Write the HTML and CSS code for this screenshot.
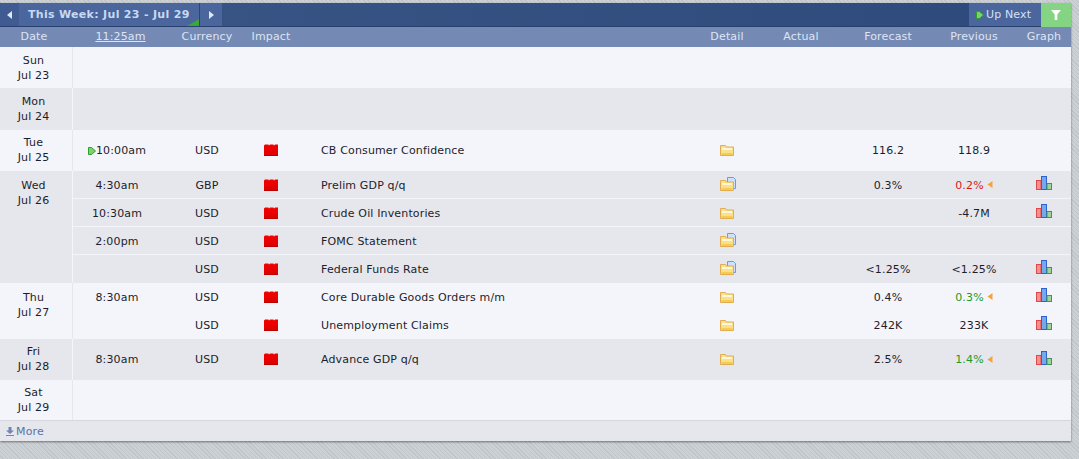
FILE: index.html
```html
<!DOCTYPE html>
<html lang="en">
<head>
<meta charset="utf-8">
<title>Calendar</title>
<link rel="stylesheet" href="styles.css">
</head>
<body>
<svg class="defs" width="0" height="0">
  <defs>
    <linearGradient id="red" x1="0" y1="0" x2="0" y2="1"><stop offset="0" stop-color="#f40000"/><stop offset="1" stop-color="#dc0000"/></linearGradient>
    <symbol id="factory" viewBox="0 0 14 12"><path d="M0 12V1.500L1 .5h3.300l.7 1 1-1h3.300l.7 1 1-1H14V12z" fill="url(#red)"/><path d="M0 11.500h14" stroke="#b80000"/></symbol>
    <symbol id="folder" viewBox="0 0 14 11"><path d="M.5.5h5l1 1.500h7v8.500H.5z" fill="#fbe08a" stroke="#e2ad52"/><path d="M2 4h10" stroke="#fff8d8" stroke-width="2"/><path d="M1.500 9h11" stroke="#f6cc50" stroke-width="2"/></symbol>
    <symbol id="folderdoc" viewBox="0 0 16 14"><path d="M7.500.5h6l2 2v9h-8z" fill="#cfe0fa" stroke="#7298dc"/><path d="M.5 3.500h5l1 1.500h7v8.500H.5z" fill="#fbe08a" stroke="#e2ad52"/><path d="M2 7h10" stroke="#fff8d8" stroke-width="2"/><path d="M1.500 12h11" stroke="#f6cc50" stroke-width="2"/></symbol>
    <symbol id="graph" viewBox="0 0 16 14"><rect x=".5" y="4.500" width="4.500" height="9" fill="#f49090" stroke="#e04848"/><rect x="5.500" y=".5" width="5" height="13" fill="#76a8ee" stroke="#2f62d0"/><rect x="11" y="7.500" width="4.500" height="6" fill="#a0d49c" stroke="#3f9650"/></symbol>
    <symbol id="play" viewBox="0 0 8 8"><path d="M.5.5h3l4 3.500-4 3.500h-3z" fill="#7fd06a" stroke="#2f9e2f"/></symbol>
    <symbol id="arrow" viewBox="0 0 6 7"><path d="M5.500 0v7L.5 3.500z" fill="#f3a33a"/></symbol>
  </defs>
</svg>
<main class="panel">
  <div class="topbar">
    <button class="nav nav-prev"><span class="tri tri-left"></span></button>
    <div class="week">This Week: Jul 23 - Jul 29<span class="corner"></span></div>
    <button class="nav nav-next"><span class="tri tri-right"></span></button>
    <div class="spacer"></div>
    <div class="upnext"><svg class="i-play"><use href="#play"/></svg>Up Next</div>
    <div class="filter"><svg class="i-filter" viewBox="0 0 10 10"><path d="M0 0h10L6.300 4.500V10H3.700V4.500z" fill="#fff"/></svg></div>
  </div>
  <div class="head">
    <div class="h-date">Date</div>
    <div><u>11:25am</u></div>
    <div>Currency</div>
    <div>Impact</div>
    <div></div>
    <div>Detail</div>
    <div>Actual</div>
    <div>Forecast</div>
    <div>Previous</div>
    <div class="h-graph">Graph</div>
  </div>

  <section class="day light h41"><div class="date">Sun<br>Jul 23</div><div class="rows"></div></section>
  <section class="day dark h42"><div class="date">Mon<br>Jul 24</div><div class="rows"></div></section>

  <section class="day light h41">
    <div class="date tight">Tue<br>Jul 25</div>
    <div class="rows">
      <div class="row fill">
        <div class="c t"><svg class="i-play"><use href="#play"/></svg>10:00am</div><div class="c">USD</div>
        <div class="c"><svg class="i-fac"><use href="#factory"/></svg></div>
        <div class="ev">CB Consumer Confidence</div>
        <div class="c"><svg class="i-fol"><use href="#folder"/></svg></div>
        <div></div><div class="c">116.2</div><div class="c">118.9</div><div></div>
      </div>
    </div>
  </section>

  <section class="day dark">
    <div class="date top">Wed<br>Jul 26</div>
    <div class="rows">
      <div class="row">
        <div class="c t">4:30am</div><div class="c">GBP</div>
        <div class="c"><svg class="i-fac"><use href="#factory"/></svg></div>
        <div class="ev">Prelim GDP q/q</div>
        <div class="c"><svg class="i-doc"><use href="#folderdoc"/></svg></div>
        <div></div><div class="c">0.3%</div>
        <div class="c"><span class="red">0.2%</span><svg class="i-arr"><use href="#arrow"/></svg></div>
        <div class="c"><svg class="i-gr"><use href="#graph"/></svg></div>
      </div>
      <div class="row">
        <div class="c t">10:30am</div><div class="c">USD</div>
        <div class="c"><svg class="i-fac"><use href="#factory"/></svg></div>
        <div class="ev">Crude Oil Inventories</div>
        <div class="c"><svg class="i-fol"><use href="#folder"/></svg></div>
        <div></div><div></div><div class="c">-4.7M</div>
        <div class="c"><svg class="i-gr"><use href="#graph"/></svg></div>
      </div>
      <div class="row">
        <div class="c t">2:00pm</div><div class="c">USD</div>
        <div class="c"><svg class="i-fac"><use href="#factory"/></svg></div>
        <div class="ev">FOMC Statement</div>
        <div class="c"><svg class="i-doc"><use href="#folderdoc"/></svg></div>
        <div></div><div></div><div></div><div></div>
      </div>
      <div class="row">
        <div></div><div class="c">USD</div>
        <div class="c"><svg class="i-fac"><use href="#factory"/></svg></div>
        <div class="ev">Federal Funds Rate</div>
        <div class="c"><svg class="i-doc"><use href="#folderdoc"/></svg></div>
        <div></div><div class="c">&lt;1.25%</div><div class="c">&lt;1.25%</div>
        <div class="c"><svg class="i-gr"><use href="#graph"/></svg></div>
      </div>
    </div>
  </section>

  <section class="day light">
    <div class="date top">Thu<br>Jul 27</div>
    <div class="rows">
      <div class="row">
        <div class="c t">8:30am</div><div class="c">USD</div>
        <div class="c"><svg class="i-fac"><use href="#factory"/></svg></div>
        <div class="ev">Core Durable Goods Orders m/m</div>
        <div class="c"><svg class="i-fol"><use href="#folder"/></svg></div>
        <div></div><div class="c">0.4%</div>
        <div class="c"><span class="green">0.3%</span><svg class="i-arr"><use href="#arrow"/></svg></div>
        <div class="c"><svg class="i-gr"><use href="#graph"/></svg></div>
      </div>
      <div class="row">
        <div></div><div class="c">USD</div>
        <div class="c"><svg class="i-fac"><use href="#factory"/></svg></div>
        <div class="ev">Unemployment Claims</div>
        <div class="c"><svg class="i-fol"><use href="#folder"/></svg></div>
        <div></div><div class="c">242K</div><div class="c">233K</div>
        <div class="c"><svg class="i-gr"><use href="#graph"/></svg></div>
      </div>
    </div>
  </section>

  <section class="day dark h41">
    <div class="date tight">Fri<br>Jul 28</div>
    <div class="rows">
      <div class="row fill">
        <div class="c t">8:30am</div><div class="c">USD</div>
        <div class="c"><svg class="i-fac"><use href="#factory"/></svg></div>
        <div class="ev">Advance GDP q/q</div>
        <div class="c"><svg class="i-fol"><use href="#folder"/></svg></div>
        <div></div><div class="c">2.5%</div>
        <div class="c"><span class="green">1.4%</span><svg class="i-arr"><use href="#arrow"/></svg></div>
        <div class="c"><svg class="i-gr"><use href="#graph"/></svg></div>
      </div>
    </div>
  </section>

  <section class="day light h40"><div class="date">Sat<br>Jul 29</div><div class="rows"></div></section>

  <div class="foot"><svg class="i-down" viewBox="0 0 8 9"><path d="M2.500 0h3v3.500H8L4 7 0 3.500h2.500zM0 8h8v1H0z" fill="#6d86b4"/></svg>More</div>
</main>
</body>
</html>
```
FILE: styles.css
```css
* { box-sizing: border-box; }
html, body { margin: 0; height: 100%; }
body {
  padding: 3px 8px 0 0;
  overflow: hidden;
  background-color: #ccd1d5;
  background-image: repeating-linear-gradient(45deg, #ccd1d5 0 2px, #bfc5c9 2px 3px);
  font: 11px/15px "DejaVu Sans", Verdana, sans-serif;
  letter-spacing: .15px;
  color: #1d1d2b;
}
.defs { position: absolute; }
.panel { width: 1071px; height: 438px; box-shadow: 0 1px 2px rgba(0,0,0,.45); display: flex; flex-direction: column; }

.topbar { height: 24px; display: flex; background: linear-gradient(90deg, #3a5687, #2e4a7c); border-bottom: 1px solid #27406e; flex: none; }
.nav { width: 19px; padding: 0; border: 0; display: flex; align-items: center; justify-content: center; background: #3f5b91; }
.nav-next { width: 23px; background: #4a669d; border-left: 1px solid #2c4674; }
.tri { width: 0; height: 0; border-top: 4px solid transparent; border-bottom: 4px solid transparent; }
.tri-left { border-right: 5px solid #dfe8f5; }
.tri-right { border-left: 5px solid #dfe8f5; }
.week { position: relative; width: 180px; padding-left: 9px; background: #4a669d; color: #c6d9f0; font-weight: bold; letter-spacing: .31px; line-height: 23px; white-space: nowrap; }
.corner { position: absolute; right: 0; bottom: 0; border-style: solid; border-width: 0 0 7px 12px; border-color: transparent transparent #38a838 transparent; }
.spacer { flex: 1; }
.upnext { width: 72px; background: #4a669d; color: #d5e2f3; display: flex; align-items: center; padding-left: 7px; gap: 2px; line-height: 23px; white-space: nowrap; }
.filter { width: 30px; background: #84d484; display: flex; align-items: center; justify-content: center; margin-bottom: -1px; }
.i-filter { width: 10px; height: 10px; }

.head { height: 20px; flex: none; display: grid; grid-template-columns: 73px 95px 78px 50px 401px 60px 88px 86px 86px 54px; background: #7589b5; color: #dde5f2; line-height: 20px; text-align: center; }
.h-date { padding-right: 5px; }
.h-graph { white-space: nowrap; }

.day { display: flex; }
.light { background: #f4f5fa; --line: #e6e7ec; --sep: transparent; }
.dark { background: #e6e7ec; --line: #f4f5fa; --sep: #f4f5fa; }
.h40 { height: 40px; }
.h41 { height: 41px; }
.h42 { height: 42px; }
.date { width: 73px; flex: none; padding-right: 5px; border-right: 1px solid var(--line); text-align: center; display: flex; align-items: center; justify-content: center; }
.date.top { align-items: flex-start; padding-top: 7px; }
.date.tight { padding-bottom: 1px; }
.rows { flex: 1; display: flex; flex-direction: column; }
.row { height: 28px; padding-top: 1px; display: grid; grid-template-columns: 95px 78px 50px 401px 60px 88px 86px 86px 54px; align-items: center; border-bottom: 1px solid var(--sep); }
.row:last-child { padding-top: 0; border-bottom: 0; }
.row.fill { height: 100%; }
.c { display: flex; align-items: center; justify-content: center; white-space: nowrap; }
.t { padding-right: 7px; }
.ev { padding-left: 25px; white-space: nowrap; }
.red { color: #d81818; }
.green { color: #1f9a1f; }
.i-play { width: 8px; height: 8px; flex: none; }
.i-fac { width: 14px; height: 12px; }
.fill .i-fac { margin-bottom: 1px; }
.i-fol { width: 14px; height: 11px; }
.i-doc { width: 16px; height: 14px; margin: 0 0 2px 2px; }
.i-gr { width: 16px; height: 14px; margin-bottom: 4px; }
.i-arr { width: 6px; height: 7px; margin: 0 0 1px 3px; }

.foot { flex: 1; display: flex; align-items: center; gap: 2px; padding-left: 6px; background: #e6e7ec; border-top: 1px solid #d6d7dc; color: #5a73a6; }
.i-down { width: 8px; height: 9px; }
```
